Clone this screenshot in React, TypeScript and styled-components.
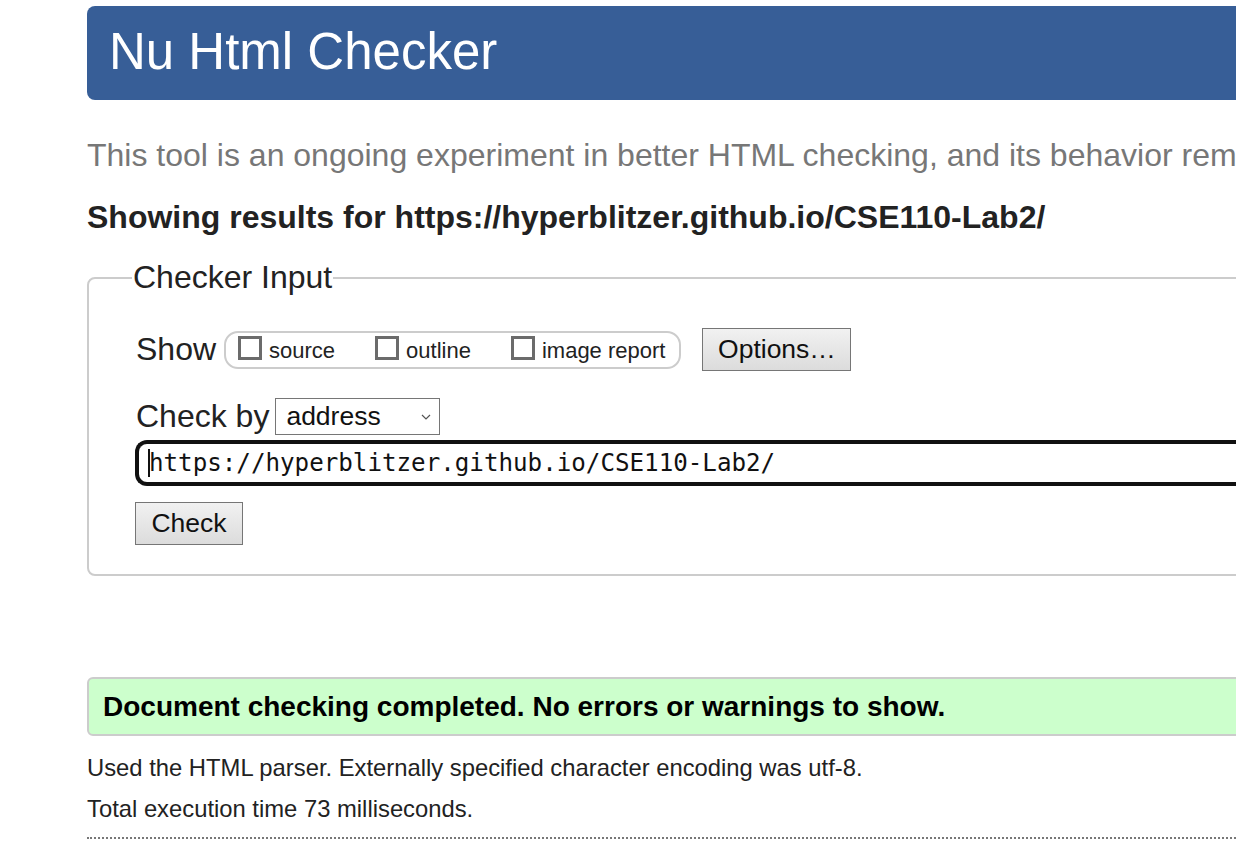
import React from "react";
import styled, { createGlobalStyle } from "styled-components";

const GlobalStyle = createGlobalStyle`
  html, body {
    margin: 0;
    padding: 0;
    background: #fff;
    overflow: hidden;
  }
  body {
    font-family: "Liberation Sans", Arial, sans-serif;
    color: #222;
  }
`;

const Page = styled.div`
  width: 1500px;
  padding: 6px 0 0 87px;
`;

const Banner = styled.h1`
  margin: 0;
  height: 94px;
  line-height: 92px;
  padding-left: 22px;
  border-radius: 8px;
  background: #375e97;
  color: #fff;
  font-size: 51px;
  font-weight: normal;
`;

const Intro = styled.p`
  margin: 37px 0 0;
  font-size: 32px;
  line-height: 36px;
  color: #777;
  white-space: nowrap;
`;

const Results = styled.h2`
  margin: 26px 0 0;
  font-size: 32px;
  line-height: 36px;
  font-weight: bold;
  color: #222;
  white-space: nowrap;
`;

const Form = styled.fieldset`
  margin: 24px 0 0;
  padding: 18px 0 29px 47px;
  border: 2px solid #ccc;
  border-radius: 8px;
`;

const Legend = styled.legend`
  margin-left: -4px;
  padding: 0 1px;
  font-size: 32px;
  color: #222;
`;

const Row = styled.div<{ $gap?: number }>`
  display: flex;
  align-items: center;
  margin-top: ${(p) => p.$gap ?? 0}px;
`;

const Label = styled.span<{ $space: number }>`
  font-size: 32px;
  color: #222;
  margin-right: ${(p) => p.$space}px;
`;

const Group = styled.div`
  display: flex;
  align-items: center;
  height: 34px;
  padding: 0 14px 0 12px;
  border: 2px solid #ccc;
  border-radius: 14px;
`;

const Opt = styled.label<{ $gap?: number }>`
  display: flex;
  align-items: flex-end;
  margin-left: ${(p) => p.$gap ?? 0}px;
  font-size: 22px;
  color: #222;
`;

const Box = styled.span`
  display: inline-block;
  width: 18px;
  height: 18px;
  border: 3px solid #6b6b6b;
  margin: 0 7px 4px 0;
`;

const Spacer = styled.span`
  width: 21px;
`;

const Button = styled.span<{ $w: number }>`
  display: inline-flex;
  align-items: center;
  justify-content: center;
  box-sizing: border-box;
  width: ${(p) => p.$w}px;
  height: 43px;
  border: 1px solid #767676;
  background: linear-gradient(#f1f1f1, #dcdcdc);
  font-size: 26.5px;
  color: #111;
`;

const CheckButton = styled(Button)`
  margin-left: -1px;
`;

const Select = styled.div`
  display: flex;
  align-items: center;
  justify-content: space-between;
  box-sizing: border-box;
  width: 165px;
  height: 37px;
  padding: 0 8px 0 10px;
  border: 1px solid #767676;
  font-size: 26.5px;
  color: #111;
`;

const UrlBox = styled.div`
  display: flex;
  align-items: center;
  box-sizing: border-box;
  height: 46px;
  margin: 5px 0 0 -1px;
  padding-left: 9px;
  border: 4px solid #111;
  border-right: none;
  border-radius: 12px 0 0 12px;
  font-family: "DejaVu Sans Mono", "Liberation Mono", monospace;
  font-size: 24.2px;
  color: #111;
  white-space: nowrap;
  &::before {
    content: "";
    display: inline-block;
    width: 2px;
    height: 28px;
    background: #111;
    margin-right: -1px;
  }
`;

const Notice = styled.p`
  margin: 101px 0 0;
  height: 55px;
  line-height: 55px;
  padding-left: 14px;
  border: 2px solid #ccc;
  border-radius: 6px;
  background: #ccffcc;
  font-size: 28px;
  font-weight: bold;
  color: #000;
  white-space: nowrap;
`;

const Detail = styled.p<{ $top: number }>`
  margin: ${(p) => p.$top}px 0 0;
  font-size: 23.8px;
  line-height: 26px;
  color: #222;
  white-space: nowrap;
`;

const Rule = styled.hr`
  margin: 15px 0 0;
  border: none;
  border-top: 2px dotted #777;
  height: 0;
`;

export default function App() {
  return (
    <>
      <GlobalStyle />
      <Page>
        <Banner>Nu Html Checker</Banner>
        <Intro>
          This tool is an ongoing experiment in better HTML checking, and its
          behavior remains subject to change
        </Intro>
        <Results>
          Showing results for https://hyperblitzer.github.io/CSE110-Lab2/
        </Results>
        <Form>
          <Legend>Checker Input</Legend>
          <Row $gap={14}>
            <Label $space={8}>Show</Label>
            <Group>
              <Opt>
                <Box />
                source
              </Opt>
              <Opt $gap={40}>
                <Box />
                outline
              </Opt>
              <Opt $gap={40}>
                <Box />
                image report
              </Opt>
            </Group>
            <Spacer />
            <Button $w={149}>Options…</Button>
          </Row>
          <Row $gap={27}>
            <Label $space={6}>Check by</Label>
            <Select>
              address
              <svg width="10" height="6" viewBox="0 0 10 6">
                <path d="M1 1l4 4 4-4" fill="none" stroke="#555" strokeWidth="1.2" />
              </svg>
            </Select>
          </Row>
          <UrlBox>https://hyperblitzer.github.io/CSE110-Lab2/</UrlBox>
          <Row $gap={16}>
            <CheckButton $w={108}>Check</CheckButton>
          </Row>
        </Form>
        <Notice>Document checking completed. No errors or warnings to show.</Notice>
        <Detail $top={19}>
          Used the HTML parser. Externally specified character encoding was utf-8.
        </Detail>
        <Detail $top={15}>Total execution time 73 milliseconds.</Detail>
        <Rule />
      </Page>
    </>
  );
}
